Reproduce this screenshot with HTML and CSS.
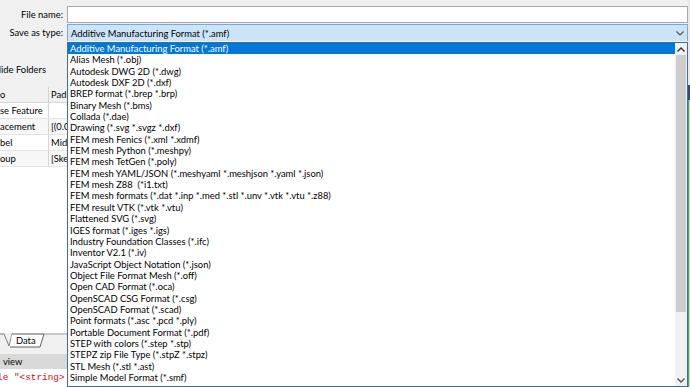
FILE: index.html
```html
<!DOCTYPE html>
<html lang="en">
<head>
    <meta charset="UTF-8">
    <title>Save as</title>
    <link rel="stylesheet" href="styles.css">
</head>
<body>
    <div class="dialog">
        <div class="side">
            <div class="field-label">File name:</div>
            <div class="field-label">Save as type:</div>
            <div class="hide-folders">Hide Folders</div>
            <div class="props">
                <div class="prop-row head"><span class="c1">o</span><span class="c2">Pad</span></div>
                <div class="prop-row"><span class="c1">se Feature</span><span class="c2"></span></div>
                <div class="prop-row alt"><span class="c1">acement</span><span class="c2">[(0.0</span></div>
                <div class="prop-row"><span class="c1">bel</span><span class="c2">Mid</span></div>
                <div class="prop-row alt"><span class="c1">oup</span><span class="c2">[Ske</span></div>
                <div class="props-fill"></div>
            </div>
            <div class="tabbar">
                <svg width="67" height="16" viewBox="0 0 67 16">
                    <polyline points="0,1 4,1 9,13 12,1" fill="none" stroke="#808080" stroke-width="1"/>
                    <polyline points="12,1 44,1 40,14 10,14" fill="#fff" stroke="#606060" stroke-width="1"/>
                    <line x1="44" y1="1" x2="67" y2="1" stroke="#a0a0a0"/>
                    <text x="16" y="11" font-family="Lato, sans-serif" font-size="9.4" fill="#000">Data</text>
                </svg>
            </div>
            <div class="report-head">view</div>
            <div class="report-body">le "&lt;string&gt;</div>
        </div>

        <div class="main">
            <div class="input"></div>
            <div class="combo">
                <span>Additive Manufacturing Format (*.amf)</span>
                <svg class="chev" width="8" height="5" viewBox="0 0 8 5"><polyline points="0.5,0.5 4,4 7.5,0.5" fill="none" stroke="#555" stroke-width="1.2"/></svg>
            </div>
            <div class="list">
                <ul class="items">
                    <li class="sel">Additive Manufacturing Format (*.amf)</li>
                    <li>Alias Mesh (*.obj)</li>
                    <li>Autodesk DWG 2D (*.dwg)</li>
                    <li>Autodesk DXF 2D (*.dxf)</li>
                    <li>BREP format (*.brep *.brp)</li>
                    <li>Binary Mesh (*.bms)</li>
                    <li>Collada (*.dae)</li>
                    <li>Drawing (*.svg *.svgz *.dxf)</li>
                    <li>FEM mesh Fenics (*.xml *.xdmf)</li>
                    <li>FEM mesh Python (*.meshpy)</li>
                    <li>FEM mesh TetGen (*.poly)</li>
                    <li>FEM mesh YAML/JSON (*.meshyaml *.meshjson *.yaml *.json)</li>
                    <li>FEM mesh Z88&nbsp; (*i1.txt)</li>
                    <li>FEM mesh formats (*.dat *.inp *.med *.stl *.unv *.vtk *.vtu *.z88)</li>
                    <li>FEM result VTK (*.vtk *.vtu)</li>
                    <li>Flattened SVG (*.svg)</li>
                    <li>IGES format (*.iges *.igs)</li>
                    <li>Industry Foundation Classes (*.ifc)</li>
                    <li>Inventor V2.1 (*.iv)</li>
                    <li>JavaScript Object Notation (*.json)</li>
                    <li>Object File Format Mesh (*.off)</li>
                    <li>Open CAD Format (*.oca)</li>
                    <li>OpenSCAD CSG Format (*.csg)</li>
                    <li>OpenSCAD Format (*.scad)</li>
                    <li>Point formats (*.asc *.pcd *.ply)</li>
                    <li>Portable Document Format (*.pdf)</li>
                    <li>STEP with colors (*.step *.stp)</li>
                    <li>STEPZ zip File Type (*.stpZ *.stpz)</li>
                    <li>STL Mesh (*.stl *.ast)</li>
                    <li>Simple Model Format (*.smf)</li>
                </ul>
                <div class="scrollbar">
                    <div class="arrow">
                        <svg width="8" height="5" viewBox="0 0 8 5"><polyline points="0.5,4.5 4,1 7.5,4.5" fill="none" stroke="#333" stroke-width="1.4"/></svg>
                    </div>
                    <div class="thumb"></div>
                    <div class="track"></div>
                    <div class="arrow">
                        <svg width="8" height="5" viewBox="0 0 8 5"><polyline points="0.5,0.5 4,4 7.5,0.5" fill="none" stroke="#555" stroke-width="1.4"/></svg>
                    </div>
                </div>
            </div>
        </div>

        <div class="behind">
            <div class="b-top"></div>
            <div class="b-navy"></div>
            <div class="b-green"></div>
        </div>
    </div>
</body>
</html>
```

FILE: styles.css
```css
body {
    margin: 0;
    width: 690px;
    height: 387px;
    overflow: hidden;
    background: #f0f0f0;
    font-family: Lato, "Liberation Sans", sans-serif;
    font-size: 9.4px;
    color: #000;
}
.dialog {
    display: grid;
    grid-template-columns: 67px 621px 2px;
    height: 387px;
}

/* left side: labels and the window behind the dialog */
.side {
    display: flex;
    flex-direction: column;
    overflow: hidden;
    padding-top: 6px;
}
.field-label {
    height: 18px;
    line-height: 18px;
    text-align: right;
    padding-right: 4px;
    white-space: nowrap;
}
.hide-folders {
    margin-top: 20px;
    height: 16px;
    line-height: 16px;
    margin-left: -6px;
    white-space: nowrap;
}
.props {
    margin-top: 9px;
    height: 246px;
    background: #fff;
    display: flex;
    flex-direction: column;
}
.prop-row {
    display: flex;
    height: 15px;
    line-height: 15px;
    border-bottom: 1px solid #e3e3e3;
    white-space: nowrap;
}
.prop-row.head {
    background: #f0f0f0;
    border-bottom: 1px solid #d5d5d5;
}
.prop-row.alt {
    background: #f7f7f7;
}
.c1 {
    width: 48px;
    overflow: hidden;
    border-right: 1px solid #d5d5d5;
}
.c2 {
    flex: 1;
    padding-left: 2px;
    overflow: hidden;
}
.props-fill {
    flex: 1;
}
.tabbar {
    height: 15px;
    background: #f0f0f0;
}
.tabbar svg {
    display: block;
}
.report-head {
    margin-top: 6px;
    height: 15px;
    line-height: 15px;
    background: #d9d9d9;
    padding-left: 3px;
}
.report-body {
    flex: 1;
    background: #fff;
    color: #d01010;
    font-family: "Liberation Mono", monospace;
    font-size: 9.4px;
    line-height: 17px;
    white-space: nowrap;
    margin-left: -3px;
}

/* dialog fields */
.main {
    padding-top: 6px;
    display: flex;
    flex-direction: column;
}
.input {
    height: 15px;
    background: #fff;
    border: 1px solid #a8a8a8;
    margin-bottom: 1px;
}
.combo {
    height: 16px;
    background: #cce4f7;
    border: 1px solid #7fa8cc;
    border-bottom: none;
    display: flex;
    align-items: center;
    justify-content: space-between;
    padding: 0 3px 0 3px;
    margin-bottom: 1px;
}
.chev {
    display: block;
}
.list {
    flex: 1;
    display: flex;
    border: 1px solid #3a6f9e;
    background: #fff;
}
.items {
    list-style: none;
    margin: 0;
    padding: 0;
    flex: 1;
}
.items li {
    height: 11.35px;
    line-height: 11.35px;
    padding-left: 2px;
    white-space: nowrap;
}
.items li.sel {
    background: #0078d7;
    color: #fff;
}
.scrollbar {
    width: 12px;
    display: flex;
    flex-direction: column;
    background: #f0f0f0;
}
.arrow {
    height: 12px;
    display: flex;
    align-items: center;
    justify-content: center;
}
.thumb {
    height: 257px;
    background: #cdcdcd;
    margin: 0 1px;
}
.track {
    flex: 1;
}

/* the edge of the main window showing on the right */
.behind {
    display: flex;
    flex-direction: column;
}
.b-top {
    height: 85px;
    background: #e8e8e8;
}
.b-navy {
    height: 15px;
    background: #3a4a6a;
}
.b-green {
    flex: 1;
    background: linear-gradient(90deg, #4caf50 0 1px, #d0d0d0 1px);
}
```
